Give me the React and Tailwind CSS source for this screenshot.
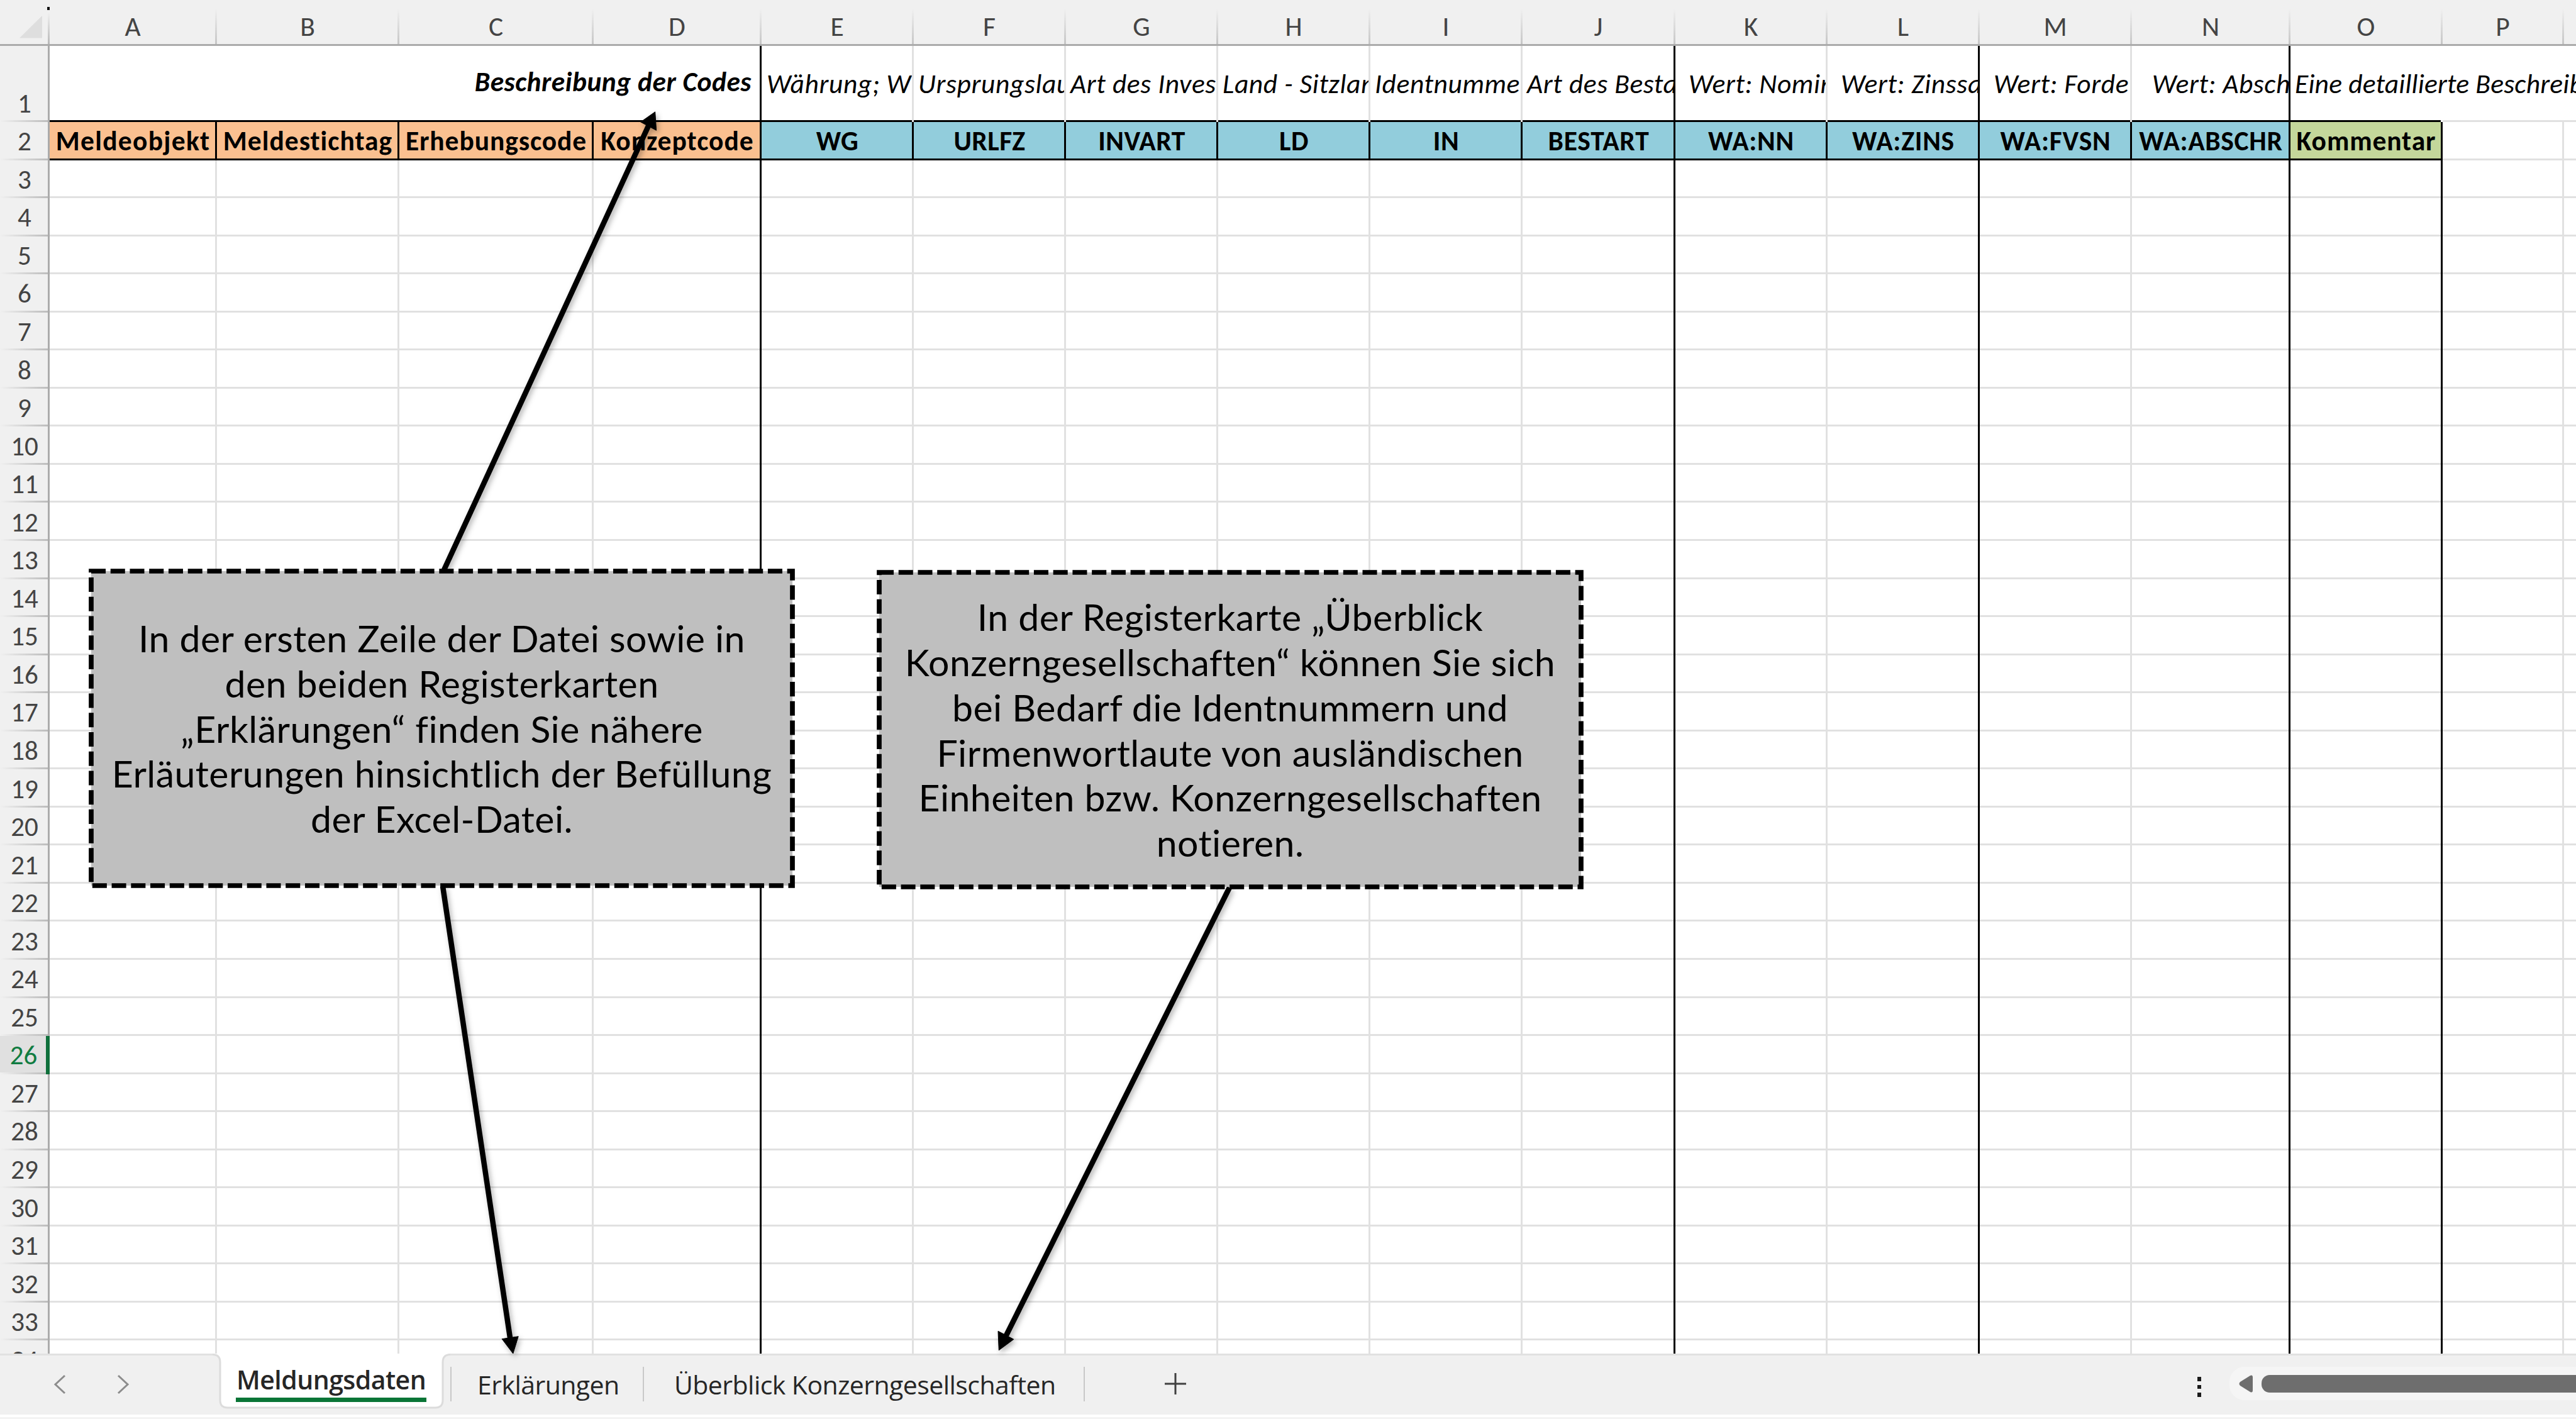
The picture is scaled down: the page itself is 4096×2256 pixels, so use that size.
// src/App.jsx
import React from "react";

const COLUMNS = [
  { id: "A", width: "w-[266px]", code: "Meldeobjekt", fill: "bg-[#fac090] tracking-[1.3px]" },
  { id: "B", width: "w-[290px]", code: "Meldestichtag", fill: "bg-[#fac090] tracking-[1px]" },
  { id: "C", width: "w-[309px]", code: "Erhebungscode", fill: "bg-[#fac090] tracking-[0.9px]" },
  { id: "D", width: "w-[267px]", code: "Konzeptcode", fill: "bg-[#fac090] tracking-[1px]", divider: true },
  { id: "E", width: "w-[242px]", code: "WG", fill: "bg-[#92cddc] tracking-[0.5px]", info: "Währung; W", pad: "pl-[8px]" },
  { id: "F", width: "w-[242px]", code: "URLFZ", fill: "bg-[#92cddc] tracking-[0.5px]", info: "Ursprungslau", pad: "pl-[7px]" },
  { id: "G", width: "w-[242px]", code: "INVART", fill: "bg-[#92cddc] tracking-[0.5px]", info: "Art des Inves", pad: "pl-[7px]" },
  { id: "H", width: "w-[242px]", code: "LD", fill: "bg-[#92cddc] tracking-[0.5px]", info: "Land - Sitzlan", pad: "pl-[7px]" },
  { id: "I", width: "w-[242px]", code: "IN", fill: "bg-[#92cddc] tracking-[0.5px]", info: "Identnumme", pad: "pl-[7px]" },
  { id: "J", width: "w-[243px]", code: "BESTART", fill: "bg-[#92cddc] tracking-[0.8px]", info: "Art des Besta", pad: "pl-[7px]", divider: true },
  { id: "K", width: "w-[242px]", code: "WA:NN", fill: "bg-[#92cddc] tracking-[0.8px]", info: "Wert: Nomin", pad: "pl-[21px]" },
  { id: "L", width: "w-[242px]", code: "WA:ZINS", fill: "bg-[#92cddc] tracking-[0.8px]", info: "Wert: Zinssa", pad: "pl-[21px]", divider: true },
  { id: "M", width: "w-[242px]", code: "WA:FVSN", fill: "bg-[#92cddc] tracking-[0.8px]", info: "Wert: Forde", pad: "pl-[22px]" },
  { id: "N", width: "w-[252px]", code: "WA:ABSCHR", fill: "bg-[#92cddc] tracking-[0.7px]", info: "Wert: Absch", pad: "pl-[32px]", divider: true },
  { id: "O", width: "w-[242px]", code: "Kommentar", fill: "bg-[#c4d79b] tracking-[0.9px]", divider: true },
  { id: "P", width: "w-[193px]" },
  { id: "", width: "w-[40px]" },
];

const EMPTY_ROWS = Array.from({ length: 32 }, (_, i) => i + 3);

function RowHeader({ n, active, bottom }) {
  return (
    <div className={`flex w-[79px] shrink-0 ${active ? "bg-[#e0e0e0]" : ""}`}>
      <div className="flex flex-1 flex-col">
        <div
          className={`flex flex-1 justify-center pl-[2px] text-[43px] leading-[46px] ${
            bottom ? "items-end pb-[3px]" : "items-center pt-[5px]"
          } ${active ? "text-[#107c41]" : "text-[#444444]"}`}
        >
          {n}
        </div>
        <div className="h-[3px] bg-linear-to-r from-[#f0f0f0] to-[#bdbdbd]" />
      </div>
      <div className={active ? "w-[6px] bg-[#0f703b]" : "w-[3px] bg-[#ababab]"} />
    </div>
  );
}

function Cell({ width, right = "bg-[#e1e1e1]", bottom = "border-[#e1e1e1]", className = "", children }) {
  return (
    <div className={`flex shrink-0 ${width}`}>
      <div className={`min-w-0 flex-1 border-b-[3px] ${bottom} ${className}`}>{children}</div>
      <div className={`w-[3px] shrink-0 ${right}`} />
    </div>
  );
}

function ColumnHeaders() {
  return (
    <div className="flex h-[73px] shrink-0 border-b-[3px] border-[#ababab] bg-[#f0f0f0]">
      <div className="flex w-[79px] shrink-0 justify-end">
        <svg className="h-[70px] w-[79px]" viewBox="0 0 79 70">
          <defs>
            <linearGradient id="fade" x1="0" y1="0" x2="0" y2="1">
              <stop offset="0" stopColor="#f0f0f0" />
              <stop offset="1" stopColor="#b8b8b8" />
            </linearGradient>
          </defs>
          <path d="M31 60.5 H67 V25 Z" fill="#dedede" />
          <rect x="76" y="20" width="3" height="50" fill="url(#fade)" />
          <rect x="75" y="11" width="4.5" height="5" fill="#111" />
        </svg>
      </div>
      {COLUMNS.map((col) => (
        <div key={col.id} className={`flex shrink-0 ${col.width}`}>
          <div className="flex flex-1 items-center justify-center pt-[16px] pl-[1px] text-[43.5px] leading-[46px] text-[#444444]">
            {col.id}
          </div>
          <div className="mt-[14px] w-[3px] bg-linear-to-b from-[#f0f0f0] to-[#c6c6c6]" />
        </div>
      ))}
    </div>
  );
}

function Sheet() {
  return (
    <div className="flex min-h-0 flex-1 flex-col overflow-hidden bg-white">
      {/* Row 1: descriptions */}
      <div className="flex h-[121px] shrink-0">
        <div className="flex bg-[#f0f0f0]">
          <RowHeader n={1} bottom />
        </div>
        <Cell
          width="w-[1132px]"
          right="bg-black"
          bottom="border-black"
          className="pt-[35px] pr-[13px] text-right text-[43.5px] leading-[46px] font-bold italic tracking-[0.5px]"
        >
          Beschreibung der Codes
        </Cell>
        {COLUMNS.slice(4, 14).map((col) => (
          <Cell
            key={col.id}
            width={col.width}
            right={col.divider ? "bg-black" : "bg-[#e1e1e1]"}
            bottom="border-black"
            className={`overflow-hidden pt-[38px] text-[43.5px] leading-[46px] tracking-[0.6px] whitespace-nowrap italic ${col.pad}`}
          >
            {col.info}
          </Cell>
        ))}
        <Cell
          width="w-[242px]"
          right="bg-transparent"
          bottom="border-black"
          className="pt-[38px] pl-[7px] text-[43.5px] leading-[46px] tracking-[0.2px] whitespace-nowrap italic"
        >
          Eine detaillierte Beschreib
        </Cell>
        <Cell width="w-[233px]" right="bg-transparent" />
      </div>

      {/* Row 2: codes */}
      <div className="flex h-[60.5px] shrink-0">
        <div className="flex bg-[#f0f0f0]">
          <RowHeader n={2} />
        </div>
        {COLUMNS.map((col) => (
          <Cell
            key={col.id}
            width={col.width}
            right={col.code ? "bg-black" : "bg-[#e1e1e1]"}
            bottom={col.code ? "border-black" : "border-[#e1e1e1]"}
            className={`flex items-center justify-center pt-[5px] pl-[2px] text-[43.5px] leading-[46px] font-bold whitespace-nowrap ${col.fill ?? ""}`}
          >
            {col.code}
          </Cell>
        ))}
      </div>

      {EMPTY_ROWS.map((n) => (
        <div key={n} className="flex h-[60.55px] shrink-0">
          <div className="flex bg-[#f0f0f0]">
            <RowHeader n={n} active={n === 26} />
          </div>
          {COLUMNS.map((col) => (
            <Cell key={col.id} width={col.width} right={col.divider ? "bg-black" : "bg-[#e1e1e1]"} />
          ))}
        </div>
      ))}
    </div>
  );
}

function Callout({ className, children }) {
  return (
    <div className={`absolute flex items-center justify-center bg-[#bfbfbf] ${className}`}>
      <svg className="absolute inset-0 h-full w-full overflow-visible">
        <rect
          width="100%"
          height="100%"
          fill="none"
          stroke="#000"
          strokeWidth="7.7"
          strokeDasharray="23.05 7.69"
        />
      </svg>
      <p className="relative pt-[1px] text-center font-[Lato,sans-serif] text-[59px] leading-[71.7px] tracking-[0.45px] whitespace-nowrap text-black">
        {children}
      </p>
    </div>
  );
}

function Arrows() {
  return (
    <svg
      className="absolute inset-0 h-[2256px] w-[4096px] drop-shadow-[3px_4px_4px_rgba(0,0,0,0.3)]"
      viewBox="0 0 4096 2256"
      stroke="#000"
      strokeWidth="8.5"
    >
      <path d="M706 906 L1032 198" />
      <path d="M1041.7 177.8 L1018.7 194 L1043.6 207.3 Z" strokeWidth="1" />
      <path d="M704 1409 L811.5 2130" />
      <path d="M815.8 2152 L798.1 2128.7 L824.2 2124.7 Z" strokeWidth="1" />
      <path d="M1955 1411 L1598.5 2126" />
      <path d="M1588.3 2146.7 L1587 2116.3 L1611.8 2129.3 Z" strokeWidth="1" />
    </svg>
  );
}

function TabBar() {
  return (
    <div className="flex h-[97px] shrink-0 items-start border-t-[3px] border-[#e1e1e1] bg-[#f0f0f0] font-['Open_Sans','Noto_Sans',sans-serif] text-[41px] leading-[56px] tracking-[-0.55px] text-[#262626]">
      <div className="flex w-[338px] shrink-0 pt-[29px] pl-[83px]">
        <svg className="h-[34px] w-[125px]" viewBox="0 0 125 34" fill="none" stroke="#8c8c8c" strokeWidth="3">
          <path d="M20 3 L5 17 L20 31" />
          <path d="M105 3 L120 17 L105 31" />
        </svg>
      </div>

      {/* Active tab */}
      <div className="relative -mt-[3px] h-[90px] w-[378px] shrink-0 pl-[37px]">
        <svg className="absolute inset-0 h-[90px] w-[378px]" viewBox="0 0 378 90">
          <path d="M0 0 H378 V1.5 Q366 1.5 366 14 V74 Q366 86 354 86 H24 Q12 86 12 74 V14 Q12 1.5 0 1.5 Z" fill="#fff" />
          <path
            d="M0 1.5 Q12 1.5 12 14 V74 Q12 86 24 86 H354 Q366 86 366 74 V14 Q366 1.5 378 1.5"
            fill="none"
            stroke="#dcdcdc"
            strokeWidth="3"
          />
        </svg>
        <div className="relative w-[303px] border-b-[7px] border-[#0a7536] pt-[14px] pb-[1px] pl-px leading-[55px] font-semibold whitespace-nowrap">
          Meldungsdaten
        </div>
      </div>

      <div className="mt-[18px] h-[55px] w-[2px] bg-[#c8c8c8]" />
      <div className="w-[304px] shrink-0 pt-[18px] pl-[41px] whitespace-nowrap">Erklärungen</div>
      <div className="mt-[18px] h-[55px] w-[2px] bg-[#c8c8c8]" />
      <div className="w-[699px] shrink-0 pt-[18px] pl-[48px] whitespace-nowrap">Überblick Konzerngesellschaften</div>
      <div className="mt-[18px] h-[55px] w-[2px] bg-[#c8c8c8]" />
      <svg className="mt-[28px] ml-[127px] h-[34px] w-[34px]" viewBox="0 0 34 34" stroke="#404040" strokeWidth="3">
        <path d="M17 0 V34 M0 17 H34" />
      </svg>

      <div className="ml-auto flex shrink-0">
        <div className="mt-[34px] mr-[45px] flex flex-col gap-[6px]">
          <span className="h-[6.5px] w-[6px] bg-[#1a1a1a]" />
          <span className="h-[6.5px] w-[6px] bg-[#1a1a1a]" />
          <span className="h-[6.5px] w-[6px] bg-[#1a1a1a]" />
        </div>
        <div className="mt-[18px] flex h-[53px] w-[551px] items-center rounded-l-3xl bg-[#f5f5f5] pl-[15px]">
          <svg className="h-[28px] w-[22px]" viewBox="0 0 22 28" fill="#6e6e6e">
            <path d="M18 1 Q22 -1 22 4 V24 Q22 29 18 27 L2 17 Q-1 14 2 11 Z" />
          </svg>
          <div className="ml-[14px] h-[28px] flex-1 rounded-l-[13px] bg-[#6e6e6e]" />
        </div>
      </div>
    </div>
  );
}

export default function App() {
  return (
    <div className="relative flex h-[2256px] w-[4096px] flex-col overflow-hidden bg-white font-[Carlito,Lato,sans-serif] text-black [font-variant-ligatures:none]">
      <ColumnHeaders />
      <Sheet />
      <TabBar />
      <div className="h-[7px] shrink-0 border-b-[3px] border-[#f3f3f3] bg-white" />

      <Arrows />
      <Callout className="top-[908px] left-[145px] h-[500px] w-[1115px]">
        In der ersten Zeile der Datei sowie in
        <br />
        den beiden Registerkarten
        <br />
        „Erklärungen“ finden Sie nähere
        <br />
        Erläuterungen hinsichtlich der Befüllung
        <br />
        der Excel-Datei.
      </Callout>
      <Callout className="top-[910px] left-[1398px] h-[500px] w-[1116px]">
        In der Registerkarte „Überblick
        <br />
        Konzerngesellschaften“ können Sie sich
        <br />
        bei Bedarf die Identnummern und
        <br />
        Firmenwortlaute von ausländischen
        <br />
        Einheiten bzw. Konzerngesellschaften
        <br />
        notieren.
      </Callout>
    </div>
  );
}
